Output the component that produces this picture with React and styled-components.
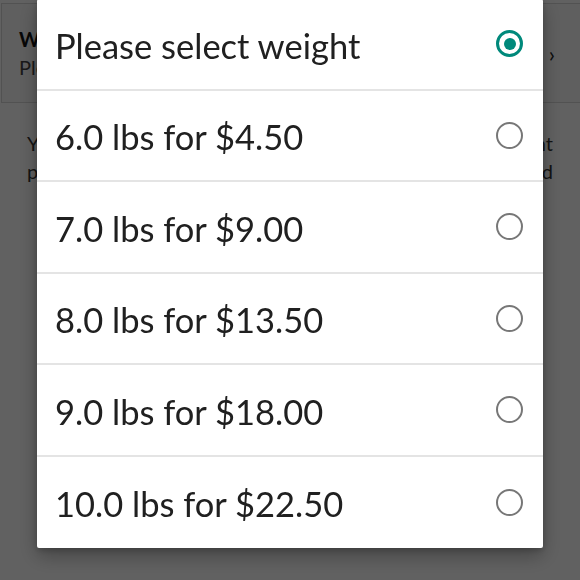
import styled, { createGlobalStyle } from 'styled-components';

const GlobalStyle = createGlobalStyle`
  html, body {
    margin: 0;
    padding: 0;
    background: #fff;
    overflow: hidden;
  }
  body {
    font-family: Lato, "Open Sans", sans-serif;
    color: #212121;
  }
`;

const Page = styled.div`
  width: 580px;
  height: 580px;
  position: relative;
  overflow: hidden;
`;

// the product page that lies under the dialog
const WeightCard = styled.div`
  margin: 3px -6px 0 1px;
  height: 100px;
  border: 1px solid #d8d8d8;
  background: #fafafa;
  display: flex;
  align-items: center;
  justify-content: space-between;
  padding: 0 30px 0 17px;
  box-sizing: border-box;
`;

const CardText = styled.div`
  display: flex;
  flex-direction: column;
  gap: 4px;
`;

const CardTitle = styled.div`
  font-size: 20px;
  font-weight: 700;
  color: #111;
`;

const CardSub = styled.div`
  font-size: 20px;
  color: #444;
`;

const Chevron = styled.span`
  font-size: 22px;
  color: #222;
`;

const Note = styled.p`
  margin: 26px 27px 0 27px;
  font-size: 20px;
  line-height: 28px;
  color: #333;
  white-space: nowrap;
  text-align: justify;
  text-align-last: justify;
`;

const Backdrop = styled.div`
  position: fixed;
  inset: 0;
  background: rgba(0, 0, 0, 0.62);
  display: flex;
  justify-content: center;
  align-items: flex-end;
  padding-bottom: 32px;
  box-sizing: border-box;
`;

const Dialog = styled.div`
  width: 506px;
  flex-shrink: 0;
  background: #fff;
  border-radius: 2px;
  box-shadow: 0 8px 20px rgba(0, 0, 0, 0.3), 0 2px 6px rgba(0, 0, 0, 0.2);
  display: flex;
  flex-direction: column;
`;

const Option = styled.label`
  height: 91.5px;
  flex-shrink: 0;
  display: flex;
  align-items: center;
  justify-content: space-between;
  padding: 0 20px 0 18px;
  box-sizing: border-box;
  border-bottom: ${(p) => (p.$last ? 'none' : '2px solid #e4e4e4')};
`;

const OptionText = styled.span`
  font-size: 34.5px;
  color: #202020;
  padding-top: 3px;
`;

const Radio = styled.span`
  width: 27px;
  height: 27px;
  border-radius: 50%;
  box-sizing: border-box;
  border: ${(p) => (p.$checked ? '3px solid #00897b' : '2.5px solid #777')};
  display: flex;
  align-items: center;
  justify-content: center;
  &::after {
    content: '';
    width: 12px;
    height: 12px;
    border-radius: 50%;
    background: #00897b;
    display: ${(p) => (p.$checked ? 'block' : 'none')};
  }
`;

const options = [
  'Please select weight',
  '6.0 lbs for $4.50',
  '7.0 lbs for $9.00',
  '8.0 lbs for $13.50',
  '9.0 lbs for $18.00',
  '10.0 lbs for $22.50',
];

export default function App() {
  return (
    <Page>
      <GlobalStyle />
      <WeightCard>
        <CardText>
          <CardTitle>Weight</CardTitle>
          <CardSub>Please select weight</CardSub>
        </CardText>
        <Chevron>›</Chevron>
      </WeightCard>
      <Note>
        Your item is weighed when packed, so the final amount
        <br />
        paid at pickup may differ from the price you quoted
      </Note>
      <Backdrop>
        <Dialog role="radiogroup">
          {options.map((o, i) => (
            <Option key={o} $last={i === options.length - 1}>
              <OptionText>{o}</OptionText>
              <Radio $checked={i === 0} />
            </Option>
          ))}
        </Dialog>
      </Backdrop>
    </Page>
  );
}
